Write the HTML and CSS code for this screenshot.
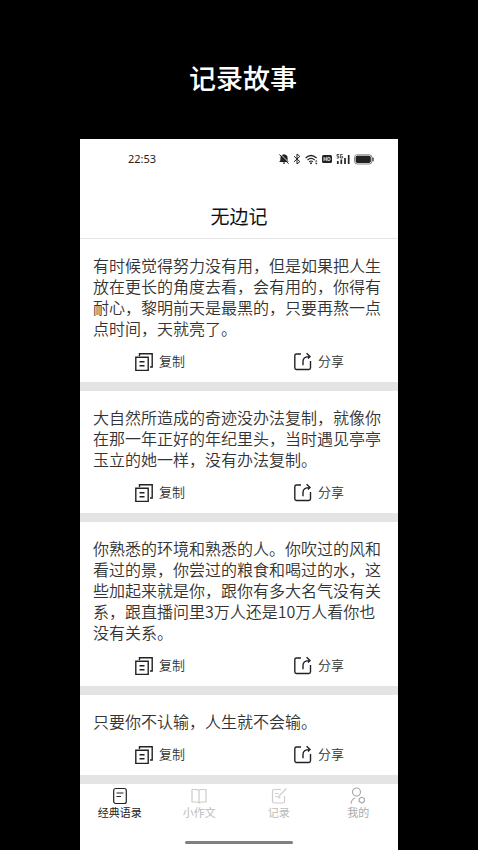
FILE: index.html
```html
<!DOCTYPE html>
<html lang="zh-CN">
<head>
    <meta charset="UTF-8">
    <meta name="viewport" content="width=device-width, initial-scale=1.0">
    <title>无边记</title>
    <link rel="stylesheet" href="styles.css">
</head>
<body>
    <!-- shared icons -->
    <svg class="icon-defs" aria-hidden="true">
        <symbol id="icon-copy" viewBox="0 0 20 20">
            <path d="M5.5 4V1.8H18.2V15H16M1.8 5.2H14.2V18.4H1.8ZM5.5 9.8H10.5M5.5 13.8H10.5" fill="none" stroke="currentColor" stroke-width="1.4"/>
        </symbol>
        <symbol id="icon-share" viewBox="0 0 20 20">
            <path d="M8 2H3.5Q1.8 2 1.8 3.7V15.8Q1.8 17.5 3.5 17.5H15.8Q17.5 17.5 17.5 15.8V9M10 13.2V9.5Q10 4.6 16.5 4.6M13.6 1.2L17 4.6L15 6.6" fill="none" stroke="currentColor" stroke-width="1.4"/>
        </symbol>
    </svg>

    <h1 class="headline">记录故事</h1>

    <div class="phone">
        <div class="status-bar">
            <span class="time">22:53</span>
            <div class="status-icons">
                <svg width="10" height="10" viewBox="0 0 10 10"><path d="M5 .2Q8.6 .6 8.6 4V6.2L9.8 8H.2L1.4 6.2V4Q1.4 .6 5 .2ZM3.6 8.5H6.4Q5.8 9.9 5 9.9T3.6 8.5Z" fill="#222"/><path d="M1.4 0L10 8.6" stroke="#fff" stroke-width=".8"/><path d="M.3.4L9.6 9.7" stroke="#222" stroke-width="1"/></svg>
                <svg width="8" height="12" viewBox="0 0 8 12"><path d="M1 3.2L6.8 8.6L4 11V1L6.8 3.4L1 8.8" fill="none" stroke="#222" stroke-width="1"/></svg>
                <svg width="13" height="11" viewBox="0 0 13 11"><path d="M.6 4Q6 -1 11.6 4M2.5 6Q6 2.8 9.7 6M4.2 7.8Q6 6.2 7.9 7.8" fill="none" stroke="#222" stroke-width="1.2"/><circle cx="6" cy="9.3" r="1" fill="#222"/><path d="M11.2 6L12.4 7.6H10ZM11.2 10.4L12.4 8.8H10Z" fill="#222"/></svg>
                <svg width="10" height="10" viewBox="0 0 10 10"><rect y="1" width="10" height="8" rx="1.5" fill="#222"/><path d="M2 3V7M4.3 3V7M2 5H4.3M5.8 3.4V6.6H7Q8.2 6.6 8.2 5T7 3.4Z" fill="none" stroke="#fff" stroke-width=".8"/></svg>
                <svg width="14" height="11" viewBox="0 0 14 11"><path d="M3.2.5H1V2.2H2.8V4H.7M6.6.5H4.6V4H6.6V2.5H5.7" fill="none" stroke="#222" stroke-width=".8"/><path d="M1.8 7V10M5.3 5.5V10M9 4V10M12.7 1V10" stroke="#222" stroke-width="1.7"/></svg>
                <svg width="20" height="11" viewBox="0 0 20 11"><rect x=".5" y=".8" width="17.4" height="9.2" rx="2.6" fill="#fff" stroke="#555" stroke-width=".7"/><rect x="1.6" y="1.8" width="15.2" height="7.2" rx="1.8" fill="#222"/><path d="M19 3.6V7.2" stroke="#222" stroke-width="1.2"/></svg>
            </div>
        </div>
        <h2 class="page-title">无边记</h2>

        <main class="feed">
            <article class="card">
                <p>有时候觉得努力没有用，但是如果把人生放在更长的角度去看，会有用的，你得有耐心，黎明前天是最黑的，只要再熬一点点时间，天就亮了。</p>
                <div class="actions">
                    <button type="button"><svg><use href="#icon-copy"/></svg>复制</button>
                    <button type="button"><svg><use href="#icon-share"/></svg>分享</button>
                </div>
            </article>
            <article class="card">
                <p>大自然所造成的奇迹没办法复制，就像你在那一年正好的年纪里头，当时遇见亭亭玉立的她一样，没有办法复制。</p>
                <div class="actions">
                    <button type="button"><svg><use href="#icon-copy"/></svg>复制</button>
                    <button type="button"><svg><use href="#icon-share"/></svg>分享</button>
                </div>
            </article>
            <article class="card">
                <p>你熟悉的环境和熟悉的人。你吹过的风和看过的景，你尝过的粮食和喝过的水，这些加起来就是你，跟你有多大名气没有关系，跟直播问里3万人还是10万人看你也没有关系。</p>
                <div class="actions">
                    <button type="button"><svg><use href="#icon-copy"/></svg>复制</button>
                    <button type="button"><svg><use href="#icon-share"/></svg>分享</button>
                </div>
            </article>
            <article class="card">
                <p>只要你不认输，人生就不会输。</p>
                <div class="actions">
                    <button type="button"><svg><use href="#icon-copy"/></svg>复制</button>
                    <button type="button"><svg><use href="#icon-share"/></svg>分享</button>
                </div>
            </article>
        </main>

        <nav class="tab-bar">
            <a href="#quotes" class="tab active">
                <svg viewBox="0 0 18 18"><rect x="2.7" y="1.5" width="12.6" height="15" rx="2"/><path d="M5.5 6H12.5M5.5 9.5H10"/></svg>
                经典语录
            </a>
            <a href="#essays" class="tab faint">
                <svg viewBox="0 0 18 18"><path d="M9 3.5Q8 2.5 6.5 2.5H2V15H6.5Q8 15 9 16Q10 15 11.5 15H16V2.5H11.5Q10 2.5 9 3.5V16"/></svg>
                小作文
            </a>
            <a href="#notes" class="tab faint">
                <svg viewBox="0 0 18 18"><path d="M11 2.5H4Q2.5 2.5 2.5 4V14.5Q2.5 16 4 16H13Q14.5 16 14.5 14.5V9M5 6.5H8.5M5 9.5H7.5M8.5 11L9 9L16.5 1.5M8.5 11L10.5 10.3"/></svg>
                记录
            </a>
            <a href="#me" class="tab">
                <svg viewBox="0 0 18 18"><circle cx="7.5" cy="5" r="4"/><path d="M2 16.8Q2.3 12.5 6 11M12.8 10.2L15.3 11.6V14.6L12.8 16L10.3 14.6V11.6Z"/></svg>
                我的
            </a>
            <div class="home-line"></div>
        </nav>
    </div>
</body>
</html>
```
FILE: styles.css
```css
* {
    box-sizing: border-box;
}
body {
    margin: 0;
    min-height: 100vh;
    display: flex;
    flex-direction: column;
    background: #000;
    color: #333;
    font-family: "Noto Sans CJK SC", sans-serif;
}
.icon-defs {
    display: none;
}
.headline {
    margin: 0;
    padding: 58px 0 41px 8px;
    color: #fff;
    font-family: KaiTi, STKaiti, "Noto Sans CJK SC", sans-serif;
    font-size: 27px;
    font-weight: 500;
    line-height: 40px;
    text-align: center;
}
.phone {
    flex: 1;
    display: flex;
    flex-direction: column;
    margin: 0 80px;
    background: #fff;
}
.status-bar {
    display: flex;
    align-items: center;
    justify-content: space-between;
    padding: 10px 24px 10px 48px;
    line-height: 20px;
}
.time {
    color: #222;
    font-family: "Noto Sans", sans-serif;
    font-size: 11px;
}
.status-icons {
    display: flex;
    align-items: center;
    gap: 4px;
}
.page-title {
    margin: 0;
    padding: 25px 0 10px;
    border-bottom: 1px solid #e4e4e4;
    color: #111;
    font-size: 19px;
    font-weight: 400;
    line-height: 24px;
    text-align: center;
}
.feed {
    flex: 1;
    background: #e4e4e4;
}
.card {
    margin-bottom: 9px;
    padding: 16px 13px 4px;
    background: #fff;
}
.card p {
    margin: 0 0 9px;
    font-size: 16px;
    font-weight: 350;
    line-height: 21px;
}
.actions {
    display: grid;
    grid-template-columns: 1fr 1fr;
    margin: 0 -13px;
}
.actions button {
    display: flex;
    align-items: center;
    justify-content: center;
    gap: 5px;
    height: 30px;
    padding: 0 0 2px;
    border: none;
    background: none;
    color: #333;
    font-family: Roboto, "Noto Sans CJK SC", sans-serif;
    font-size: 13px;
    font-weight: 350;
    line-height: 18px;
    cursor: pointer;
}
.actions svg {
    width: 20px;
    height: 20px;
    color: #222;
}
.tab-bar {
    display: grid;
    grid-template-columns: repeat(4, 1fr);
    padding: 3px 0 6px;
    background: #fff;
}
.tab {
    display: flex;
    flex-direction: column;
    align-items: center;
    color: #aaa;
    font-size: 11px;
    line-height: 14px;
    text-decoration: none;
}
.tab svg {
    width: 18px;
    height: 18px;
    fill: none;
    stroke: currentColor;
    stroke-width: 1.2;
}
.tab.faint {
    color: #bbb;
}
.tab.faint svg {
    stroke: #ccc;
}
.tab.active {
    color: #222;
}
.home-line {
    grid-column: 1 / -1;
    justify-self: center;
    width: 34%;
    min-width: 106px;
    height: 3px;
    margin-top: 22px;
    border-radius: 2px;
    background: #808080;
}
```
